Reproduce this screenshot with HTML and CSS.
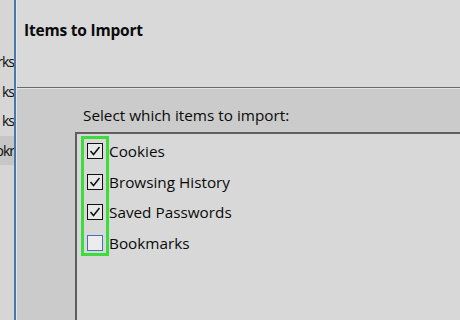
FILE: index.html
```html
<!DOCTYPE html>
<html>
<head>
<meta charset="utf-8">
<link rel="stylesheet" href="styles.css">
</head>
<body>
<div class="window">
  <div class="sidebar">
    <div class="side-item first"><span>rks</span></div>
    <div class="side-item"><span>ks</span></div>
    <div class="side-item"><span>ks</span></div>
    <div class="side-item selected"><span>okr</span></div>
  </div>
  <div class="main">
    <div class="header">
      <h1 class="title">Items to Import</h1>
    </div>
    <div class="content">
      <p class="prompt">Select which items to import:</p>
      <div class="listbox">
        <div class="checks">
          <div class="row"><span class="box checked"><svg viewBox="0 0 14 14"><path d="M2.5 7 L5.5 10.5 L11.5 3" fill="none" stroke="#111" stroke-width="1.5"/></svg></span><span class="label">Cookies</span></div>
          <div class="row"><span class="box checked"><svg viewBox="0 0 14 14"><path d="M2.5 7 L5.5 10.5 L11.5 3" fill="none" stroke="#111" stroke-width="1.5"/></svg></span><span class="label">Browsing History</span></div>
          <div class="row"><span class="box checked"><svg viewBox="0 0 14 14"><path d="M2.5 7 L5.5 10.5 L11.5 3" fill="none" stroke="#111" stroke-width="1.5"/></svg></span><span class="label">Saved Passwords</span></div>
          <div class="row"><span class="box empty"></span><span class="label">Bookmarks</span></div>
          <div class="highlight"></div>
        </div>
      </div>
    </div>
  </div>
</div>
</body>
</html>
```

FILE: styles.css
```css
html, body {
  margin: 0;
  padding: 0;
}
body {
  width: 460px;
  height: 320px;
  overflow: hidden;
  font-family: "Open Sans", "Noto Sans", sans-serif;
  color: #0a0a0a;
  background: #d8d8d8;
}
.window {
  display: flex;
  height: 320px;
}
.sidebar {
  width: 14px;
  flex: none;
  background: #d6d6d6;
  border-right: 2px solid #4a78a6;
  box-shadow: 1px 0 0 #e4e4e4;
  overflow: hidden;
  padding-top: 47px;
}
.side-item {
  height: 29.5px;
  display: flex;
  justify-content: flex-end;
  align-items: center;
  white-space: nowrap;
  font-size: 14px;
  letter-spacing: -1px;
}
.side-item.selected {
  background: #c6c6c6;
}
.main {
  flex: 1;
  display: flex;
  flex-direction: column;
  margin-left: 1px;
}
.header {
  height: 87px;
  background: #d9d9d9;
  box-sizing: border-box;
  padding: 19px 0 0 7px;
}
.title {
  margin: 0;
  font-size: 15.5px;
  font-weight: bold;
  letter-spacing: -0.2px;
}
.content {
  flex: 1;
  background: #cbcbcb;
  border-top: 1px solid #6a6a6a;
  box-shadow: inset 0 1px 0 #e2e2e2;
  display: flex;
  flex-direction: column;
}
.prompt {
  margin: 0;
  padding: 18px 0 0 66px;
  height: 26px;
  font-size: 15.3px;
  line-height: 18px;
}
.listbox {
  flex: 1;
  margin-left: 58px;
  background: #d8d8d8;
  border-top: 2px solid #5e5e5e;
  border-left: 2px solid #5e5e5e;
  padding: 2px 0 0 4px;
}
.checks {
  position: relative;
}
.row {
  height: 30.5px;
  display: flex;
  align-items: center;
}
.box {
  width: 14px;
  height: 14px;
  border: 1.5px solid #111;
  background: #e8e8e8;
  margin-left: 6px;
  margin-right: 6px;
  display: flex;
  flex: none;
}
.box svg {
  width: 14px;
  height: 14px;
}
.box.empty {
  border-color: #3f75b8;
  background: #ececec;
}
.label {
  font-size: 15.3px;
}
.highlight {
  position: absolute;
  left: 0;
  top: 0;
  width: 22px;
  height: 114px;
  border: 3px solid #3cdc3c;
}
```
